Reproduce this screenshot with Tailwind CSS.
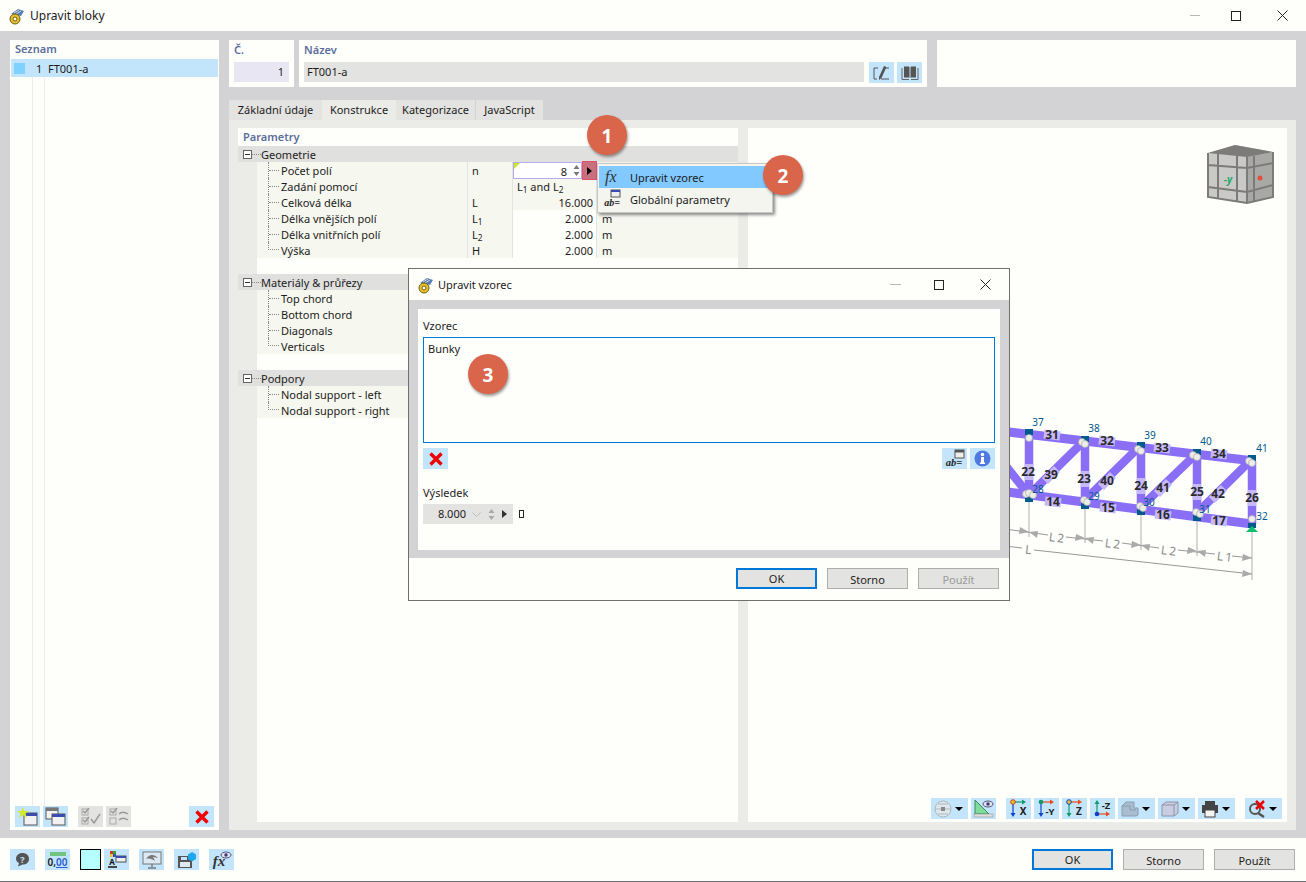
<!DOCTYPE html>
<html lang="cs">
<head>
<meta charset="UTF-8" />
<title>Upravit bloky</title>
<script src="https://cdn.jsdelivr.net/npm/@tailwindcss/browser@4"></script>
</head>
<body class="bg-[#fefefb]">
<div class="relative flex h-[882px] w-[1306px] flex-col overflow-hidden border-b border-[#6f6f6f] bg-[#fefefb] font-['Noto_Sans',sans-serif] text-[11px] leading-4 text-[#1c1c1c]">

  <!-- title bar -->
  <div class="flex h-[31px] shrink-0 items-center pl-[8px]">
    <svg class="h-[18px] w-[18px]" viewBox="0 0 18 18"><path d="M3 7 L10 2 L16 4 L13 9 Z" fill="#5a7db0"/><path d="M6 6 L11 3 M8 7 L13 4" stroke="#c9d6ea"/><circle cx="7" cy="12" r="5" fill="#e8c32a" stroke="#6d5a10"/><circle cx="7" cy="12" r="2" fill="#fefefb" stroke="#6d5a10"/></svg>
    <span class="ml-[4px] text-[12px]">Upravit bloky</span>
    <div class="ml-auto flex items-center">
      <span class="mr-[31px] h-px w-[10px] bg-[#b8b8b8]"></span>
      <span class="mr-[36px] h-[10px] w-[10px] border border-[#222]"></span>
      <svg class="mr-[18px] h-[11px] w-[11px]" viewBox="0 0 11 11"><path d="M0.5 0.5 L10.5 10.5 M10.5 0.5 L0.5 10.5" stroke="#222"/></svg>
    </div>
  </div>

  <!-- body -->
  <div class="flex h-[807px] shrink-0 gap-[10px] bg-[#d3d3d6] pb-[8px] pl-[10px] pr-[10px] pt-[9px]">

    <!-- list -->
    <div class="flex w-[209px] flex-col bg-[#fefefb]">
      <div class="flex h-[19px] items-center pb-[2px] pl-[5px] font-semibold text-[#5b6f9c]">Seznam</div>
      <div class="mx-px flex h-[18px] items-center bg-[#c3e5fb]">
        <span class="ml-[3px] h-[11px] w-[11px] bg-[#7fd1ff]"></span>
        <span class="ml-[11px] w-[5px] pt-[2px] text-right">1</span>
        <span class="ml-[7px] pt-[2px]">FT001-a</span>
      </div>
      <div class="ml-[22px] h-[729px] w-[13px] border-x border-[#ececea]"></div>
      <div class="flex pl-[5px]">
        <button class="flex h-[21px] w-[25px] items-center justify-center bg-[#c3e5fb]">
          <svg class="h-[19px] w-[21px]" viewBox="0 0 21 19"><rect x="7" y="6" width="13" height="12" fill="#f2f2f2" stroke="#555"/><rect x="7" y="6" width="13" height="3" fill="#3b4bb0"/><path d="M6 0 L7.5 4 L12 4 L8.5 6.5 L10 11 L6 8 L2 11 L3.5 6.5 L0 4 L4.5 4 Z" fill="#d5e82a"/></svg>
        </button>
        <button class="ml-[3px] flex h-[21px] w-[25px] items-center justify-center bg-[#c3e5fb]">
          <svg class="h-[19px] w-[21px]" viewBox="0 0 21 19"><rect x="1" y="1" width="12" height="11" fill="#f2f2f2" stroke="#555"/><rect x="1" y="1" width="12" height="3" fill="#777"/><rect x="7" y="7" width="13" height="11" fill="#f2f2f2" stroke="#555"/><rect x="7" y="7" width="13" height="3" fill="#3b4bb0"/></svg>
        </button>
        <button class="ml-[10px] flex h-[21px] w-[25px] items-center justify-center bg-[#e3e3e1]">
          <svg class="h-[17px] w-[20px]" viewBox="0 0 20 17"><rect x="1" y="1" width="6" height="6" fill="none" stroke="#aaa"/><rect x="1" y="10" width="6" height="6" fill="none" stroke="#aaa"/><path d="M2 3 L4 5 L8 0 M2 12 L4 14 L8 9 M10 11 L13 15 L19 6" fill="none" stroke="#999" stroke-width="1.5"/></svg>
        </button>
        <button class="ml-[3px] flex h-[21px] w-[25px] items-center justify-center bg-[#e3e3e1]">
          <svg class="h-[17px] w-[20px]" viewBox="0 0 20 17"><rect x="1" y="1" width="6" height="6" fill="none" stroke="#aaa"/><rect x="1" y="10" width="6" height="6" fill="none" stroke="#aaa"/><path d="M2 3 L4 5 L8 0 M10 6 C13 3 16 4 19 6 M10 12 C13 9 16 10 19 12" fill="none" stroke="#999" stroke-width="1.5"/></svg>
        </button>
        <button class="ml-[58px] flex h-[21px] w-[25px] items-center justify-center bg-[#c3e5fb]">
          <svg class="h-[14px] w-[14px]" viewBox="0 0 14 14"><path d="M1.5 1.5 L12.5 12.5 M12.5 1.5 L1.5 12.5" stroke="#f00000" stroke-width="3.4"/></svg>
        </button>
      </div>
    </div>

    <!-- right column -->
    <div class="flex w-[1067px] flex-col">
      <div class="flex h-[47px] gap-[5px]">
        <div class="w-[65px] bg-[#fefefb] px-[5px]">
          <div class="h-[22px] pt-[2px] font-semibold text-[#5b6f9c]">Č.</div>
          <div class="flex h-[20px] items-center justify-end bg-[#e8e6f2] px-[5px]">1</div>
        </div>
        <div class="flex w-[628px] flex-col bg-[#fefefb] px-[5px]">
          <div class="h-[22px] pt-[2px] font-semibold text-[#5b6f9c]">Název</div>
          <div class="flex items-start">
            <div class="flex h-[20px] w-[560px] items-center bg-[#e3e3e1] px-[3px]">FT001-a</div>
            <button class="ml-[5px] flex h-[21px] w-[25px] items-center justify-center bg-[#c3e5fb]">
              <svg class="h-[16px] w-[18px]" viewBox="0 0 18 16"><path d="M5 3 H1 V14 H4 M8 14 H16 M12 3 H16" fill="none" stroke="#555"/><path d="M6 12 L11 1 L13.5 2 L8.5 13 L6 15 Z" fill="#555"/></svg>
            </button>
            <button class="ml-[3px] flex h-[21px] w-[25px] items-center justify-center bg-[#c3e5fb]">
              <svg class="h-[16px] w-[18px]" viewBox="0 0 18 16"><path d="M3 1.5 H8 L8.5 2.5 V13 L8 12.5 H3 Z M15 1.5 H10 L9.5 2.5 V13 L10 12.5 H15 Z" fill="#555"/><path d="M1 3 V14.5 H8 M17 3 V14.5 H10" fill="none" stroke="#666"/></svg>
            </button>
          </div>
        </div>
        <div class="ml-[5px] w-[359px] bg-[#fefefb]"></div>
      </div>

      <!-- tabs -->
      <div class="mt-[13px] flex h-[20px] items-center">
        <div class="flex h-full w-[93px] items-center justify-center bg-[#e3e3e1]">Základní údaje</div>
        <div class="flex h-full w-[74px] items-center justify-center bg-[#ebebe7]">Konstrukce</div>
        <div class="flex h-full w-[79px] items-center justify-center bg-[#e3e3e1]">Kategorizace</div>
        <div class="ml-px flex h-full w-[67px] items-center justify-center bg-[#e3e3e1]">JavaScript</div>
      </div>

      <div class="flex h-[710px] gap-[10px] bg-[#ebebe7] p-[8px] pl-[9px]">
        <!-- parameters -->
        <div class="flex w-[500px] flex-col bg-[#fefefb]">
          <div class="flex h-[18px] items-center pl-[5px] font-semibold text-[#5b6f9c]">Parametry</div>

          <div class="flex h-[16px] items-center bg-[#e0e0de]">
            <span class="ml-[5px] flex h-[9px] w-[9px] items-center justify-center border border-[#666] bg-[#fefefb]"><span class="h-px w-[5px] bg-[#333]"></span></span>
            <span class="w-[9px] border-t border-dotted border-[#888]"></span>
            <span class="pt-[2px]">Geometrie</span>
          </div>
          <div class="flex">
            <div class="w-[19px] bg-[#ebebe7]"></div>
            <div class="flex-1 bg-[#f6f7ef]">
              <div class="flex h-[16px]">
                <div class="flex w-[210px] items-center pl-[11px]"><span class="flex h-full w-[11px] items-center border-l border-dotted border-[#888]"><span class="w-full border-t border-dotted border-[#888]"></span></span><span class="ml-[2px] pt-[2px]">Počet polí</span></div>
                <div class="flex w-[45px] items-center border-l border-[#e3e3e1] pl-[4px] pt-[2px]">n</div>
                <div class="w-[84px] border-l border-[#e3e3e1]"></div>
                <div class="border-l border-[#e3e3e1]"></div>
              </div>
              <div class="flex h-[16px]">
                <div class="flex w-[210px] items-center pl-[11px]"><span class="flex h-full w-[11px] items-center border-l border-dotted border-[#888]"><span class="w-full border-t border-dotted border-[#888]"></span></span><span class="ml-[2px] pt-[2px]">Zadání pomocí</span></div>
                <div class="w-[45px] border-l border-[#e3e3e1]"></div>
                <div class="flex w-[84px] items-center border-l border-[#e3e3e1] pl-[4px] pt-[2px]"><span>L<sub>1</sub> and L<sub>2</sub></span></div>
                <div class="border-l border-[#e3e3e1]"></div>
              </div>
              <div class="flex h-[16px]">
                <div class="flex w-[210px] items-center pl-[11px]"><span class="flex h-full w-[11px] items-center border-l border-dotted border-[#888]"><span class="w-full border-t border-dotted border-[#888]"></span></span><span class="ml-[2px] pt-[2px]">Celková délka</span></div>
                <div class="flex w-[45px] items-center border-l border-[#e3e3e1] pl-[4px] pt-[2px]">L</div>
                <div class="flex w-[84px] items-center justify-end border-l border-[#e3e3e1] pr-[3px] pt-[2px]">16.000</div>
                <div class="border-l border-[#e3e3e1]"></div>
              </div>
              <div class="flex h-[16px]">
                <div class="flex w-[210px] items-center pl-[11px]"><span class="flex h-full w-[11px] items-center border-l border-dotted border-[#888]"><span class="w-full border-t border-dotted border-[#888]"></span></span><span class="ml-[2px] pt-[2px]">Délka vnějších polí</span></div>
                <div class="flex w-[45px] items-center border-l border-[#e3e3e1] pl-[4px] pt-[2px]"><span>L<sub>1</sub></span></div>
                <div class="flex w-[84px] items-center justify-end border-l border-[#e3e3e1] bg-[#fefefb] pr-[3px] pt-[2px]">2.000</div>
                <div class="flex items-center border-l border-[#e3e3e1] pl-[5px] pt-[2px]">m</div>
              </div>
              <div class="flex h-[16px]">
                <div class="flex w-[210px] items-center pl-[11px]"><span class="flex h-full w-[11px] items-center border-l border-dotted border-[#888]"><span class="w-full border-t border-dotted border-[#888]"></span></span><span class="ml-[2px] pt-[2px]">Délka vnitřních polí</span></div>
                <div class="flex w-[45px] items-center border-l border-[#e3e3e1] pl-[4px] pt-[2px]"><span>L<sub>2</sub></span></div>
                <div class="flex w-[84px] items-center justify-end border-l border-[#e3e3e1] bg-[#fefefb] pr-[3px] pt-[2px]">2.000</div>
                <div class="flex items-center border-l border-[#e3e3e1] pl-[5px] pt-[2px]">m</div>
              </div>
              <div class="flex h-[16px]">
                <div class="flex w-[210px] items-center pl-[11px]"><span class="h-1/2 w-[11px] self-start border-b border-l border-dotted border-[#888]"></span><span class="ml-[2px] pt-[2px]">Výška</span></div>
                <div class="flex w-[45px] items-center border-l border-[#e3e3e1] pl-[4px] pt-[2px]">H</div>
                <div class="flex w-[84px] items-center justify-end border-l border-[#e3e3e1] bg-[#fefefb] pr-[3px] pt-[2px]">2.000</div>
                <div class="flex items-center border-l border-[#e3e3e1] pl-[5px] pt-[2px]">m</div>
              </div>
            </div>
          </div>
          <div class="flex h-[16px]"><div class="w-[19px] bg-[#ebebe7]"></div></div>

          <div class="flex h-[16px] items-center bg-[#e0e0de]">
            <span class="ml-[5px] flex h-[9px] w-[9px] items-center justify-center border border-[#666] bg-[#fefefb]"><span class="h-px w-[5px] bg-[#333]"></span></span>
            <span class="w-[9px] border-t border-dotted border-[#888]"></span>
            <span class="pt-[2px]">Materiály &amp; průřezy</span>
          </div>
          <div class="flex">
            <div class="w-[19px] bg-[#ebebe7]"></div>
            <div class="flex-1 bg-[#f6f7ef]">
              <div class="flex h-[16px] items-center pl-[11px]"><span class="flex h-full w-[11px] items-center border-l border-dotted border-[#888]"><span class="w-full border-t border-dotted border-[#888]"></span></span><span class="ml-[2px] pt-[2px]">Top chord</span></div>
              <div class="flex h-[16px] items-center pl-[11px]"><span class="flex h-full w-[11px] items-center border-l border-dotted border-[#888]"><span class="w-full border-t border-dotted border-[#888]"></span></span><span class="ml-[2px] pt-[2px]">Bottom chord</span></div>
              <div class="flex h-[16px] items-center pl-[11px]"><span class="flex h-full w-[11px] items-center border-l border-dotted border-[#888]"><span class="w-full border-t border-dotted border-[#888]"></span></span><span class="ml-[2px] pt-[2px]">Diagonals</span></div>
              <div class="flex h-[16px] items-center pl-[11px]"><span class="h-1/2 w-[11px] self-start border-b border-l border-dotted border-[#888]"></span><span class="ml-[2px] pt-[2px]">Verticals</span></div>
            </div>
          </div>
          <div class="flex h-[16px]"><div class="w-[19px] bg-[#ebebe7]"></div></div>

          <div class="flex h-[16px] items-center bg-[#e0e0de]">
            <span class="ml-[5px] flex h-[9px] w-[9px] items-center justify-center border border-[#666] bg-[#fefefb]"><span class="h-px w-[5px] bg-[#333]"></span></span>
            <span class="w-[9px] border-t border-dotted border-[#888]"></span>
            <span class="pt-[2px]">Podpory</span>
          </div>
          <div class="flex flex-1">
            <div class="w-[19px] bg-[#ebebe7]"></div>
            <div class="flex-1">
              <div class="bg-[#f6f7ef]">
                <div class="flex h-[16px] items-center pl-[11px]"><span class="flex h-full w-[11px] items-center border-l border-dotted border-[#888]"><span class="w-full border-t border-dotted border-[#888]"></span></span><span class="ml-[2px] pt-[2px]">Nodal support - left</span></div>
                <div class="flex h-[16px] items-center pl-[11px]"><span class="h-1/2 w-[11px] self-start border-b border-l border-dotted border-[#888]"></span><span class="ml-[2px] pt-[2px]">Nodal support - right</span></div>
              </div>
            </div>
          </div>
        </div>

        <!-- preview -->
        <div class="relative flex w-[539px] flex-col justify-end bg-[#fefefb] pb-[3px] pr-[5px]">
          <svg class="absolute left-0 top-0 h-[694px] w-[539px]" viewBox="748 128 539 694" font-family="Noto Sans, sans-serif">
            <!-- cube -->
            <path d="M1208 153 L1235 145 L1273 152 L1273 197 L1247 203 L1208 197 Z" fill="#c9c9c7"/>
            <path d="M1247 157 L1273 152 L1273 197 L1247 203 Z" fill="#a8a8a6"/>
            <path d="M1208 153 L1235 145 L1273 152 L1247 157 Z" fill="#7d7a7a"/>
            <path d="M1208 165 L1247 168 L1273 163 M1208 187 L1247 192 L1273 185 M1218 154 V199 M1237 156 V202 M1247 157 V203 M1254 156 V201 M1208 153 V197 L1247 203 L1273 197 V152" fill="none" stroke="#7d7a7a" stroke-width="2"/>
            <text x="1228" y="183" font-size="10" font-weight="700" font-style="italic" fill="#1fa968" text-anchor="middle">-y</text>
            <circle cx="1260" cy="178" r="2.5" fill="#e0503a"/>
            <!-- dimensions -->
            <g stroke="#bcbcbc" stroke-width="1.2">
              <path d="M1029 498 V537 M1085 503 V543 M1141 510 V550 M1197 516 V556 M1252 530 V580"/>
            </g>
            <g stroke="#999" stroke-width="1" fill="none">
              <path d="M1005 529 L1048 535 M1066 537 L1103 541 M1122 543 L1159 548 M1178 550 L1215 554 M1232 556 L1252 558"/>
              <path d="M1005 546 L1022 548 M1034 550 L1252 574"/>
            </g>
            <g fill="#aaa">
              <path d="M1029 532 L1020 527 L1019 534 Z M1029 532 L1038 531 L1037 538 Z M1085 538 L1076 534 L1075 541 Z M1085 538 L1094 537 L1093 544 Z M1141 545 L1132 541 L1131 548 Z M1141 545 L1150 544 L1149 551 Z M1197 551 L1188 547 L1187 554 Z M1197 551 L1206 550 L1205 557 Z M1252 558 L1243 554 L1242 561 Z M1252 574 L1243 570 L1242 577 Z"/>
            </g>
            <g fill="#8a8a8a" font-size="12" letter-spacing="2">
              <text x="1029" y="554" text-anchor="middle" transform="rotate(7 1029 554)">L</text>
              <text x="1057" y="542" text-anchor="middle" transform="rotate(7 1057 542)">L2</text>
              <text x="1113" y="548" text-anchor="middle" transform="rotate(7 1113 548)">L2</text>
              <text x="1169" y="555" text-anchor="middle" transform="rotate(7 1169 555)">L2</text>
              <text x="1225" y="561" text-anchor="middle" transform="rotate(7 1225 561)">L1</text>
            </g>
            <!-- members -->
            <g stroke="#8a6ff6" stroke-width="9" fill="none">
              <path d="M1000 431 L1254 461"/>
              <path d="M1000 491 L1252 524"/>
              <path d="M1029 437 V495 M1085 442 V500 M1141 448 V507 M1197 456 V513 M1252 461 V524" stroke-width="8.5"/>
              <path d="M1029 495 L1083 442 M1085 500 L1138 448 M1141 507 L1194 456 M1197 513 L1250 461 M1005 465 L1029 495" stroke-width="8.5"/>
            </g>
            <g stroke="#c5b9fb" stroke-width="9" fill="none">
              <path d="M1044 434 L1060 436 M1099 440 L1115 442 M1154 447 L1170 449 M1211 453 L1227 455"/>
              <path d="M1045 501 L1061 503 M1100 507 L1116 509 M1155 514 L1171 516 M1211 520 L1227 522"/>
            </g>
            <g stroke="#c5b9fb" stroke-width="8.5" fill="none">
              <path d="M1029 464 V480 M1085 471 V487 M1141 478 V494 M1197 484 V500 M1252 490 V506"/>
              <path d="M1045 481 L1057 469 M1101 487 L1113 475 M1157 494 L1169 482 M1212 500 L1224 488"/>
            </g>
            <g fill="#005a8c">
              <rect x="1025" y="429" width="8" height="6"/><rect x="1081" y="436" width="8" height="6"/><rect x="1137" y="442" width="8" height="6"/><rect x="1193" y="449" width="8" height="6"/><rect x="1248" y="455" width="8" height="6"/>
              <rect x="1025" y="496" width="8" height="6"/><rect x="1081" y="503" width="8" height="6"/><rect x="1137" y="509" width="8" height="6"/><rect x="1193" y="515" width="8" height="6"/><rect x="1248" y="523" width="8" height="5"/>
            </g>
            <path d="M1252 526 L1258 532 H1246 Z" fill="#10c070"/>
            <g fill="#eeeee8" stroke="#a8a8a8" stroke-width="0.7">
              <circle cx="1029" cy="438" r="3.5"/>
              <circle cx="1082" cy="442" r="3.5"/><circle cx="1085" cy="444" r="3.5"/>
              <circle cx="1138" cy="449" r="3.5"/><circle cx="1141" cy="451" r="3.5"/>
              <circle cx="1193" cy="455" r="3.5"/><circle cx="1197" cy="457" r="3.5"/>
              <circle cx="1249" cy="461" r="3.5"/><circle cx="1252" cy="463" r="3.5"/>
              <circle cx="1026" cy="494" r="3.5"/><circle cx="1029" cy="493" r="3.5"/><circle cx="1033" cy="495" r="3.5"/>
              <circle cx="1084" cy="500" r="3.5"/><circle cx="1087" cy="502" r="3.5"/>
              <circle cx="1140" cy="506" r="3.5"/><circle cx="1143" cy="508" r="3.5"/>
              <circle cx="1196" cy="512" r="3.5"/><circle cx="1200" cy="514" r="3.5"/>
              <circle cx="1252" cy="519" r="3.5"/>
            </g>
            <g fill="#2b2b2b" font-size="12" font-weight="700" text-anchor="middle">
              <text x="1052" y="439">31</text><text x="1107" y="445">32</text><text x="1162" y="452">33</text><text x="1219" y="458">34</text>
              <text x="1028" y="476">22</text><text x="1084" y="483">23</text><text x="1141" y="490">24</text><text x="1197" y="496">25</text><text x="1252" y="502">26</text>
              <text x="1051" y="479">39</text><text x="1107" y="485">40</text><text x="1163" y="492">41</text><text x="1218" y="498">42</text>
              <text x="1053" y="506">14</text><text x="1108" y="512">15</text><text x="1163" y="519">16</text><text x="1219" y="525">17</text>
              <text x="1003" y="474">38</text>
            </g>
            <g fill="#005a8c" font-size="10" text-anchor="middle">
              <text x="1038" y="426">37</text><text x="1094" y="432">38</text><text x="1150" y="439">39</text><text x="1206" y="445">40</text><text x="1262" y="452">41</text>
              <text x="1038" y="493">28</text><text x="1094" y="500">29</text><text x="1149" y="506">30</text><text x="1205" y="513">31</text><text x="1262" y="520">32</text>
            </g>
          </svg>

          <div class="relative flex justify-end">
            <button class="flex h-[21px] w-[37px] items-center justify-between bg-[#c3e5fb] pl-[2px] pr-[5px]">
              <svg class="h-[18px] w-[20px]" viewBox="0 0 20 18"><ellipse cx="10" cy="9" rx="8" ry="8" fill="#dce8ee" stroke="#b0b8be"/><path d="M2 9 H18 M5 4 H15 M5 14 H15" stroke="#b0b8be"/><rect x="8" y="7" width="4" height="4" fill="#888"/></svg>
              <span class="h-0 w-0 border-x-[4px] border-t-[4px] border-x-transparent border-t-black"></span>
            </button>
            <button class="ml-[3px] flex h-[21px] w-[25px] items-center justify-center bg-[#c3e5fb]">
              <svg class="h-[19px] w-[21px]" viewBox="0 0 21 19"><path d="M2 1 V15 H16 Z" fill="#7fdc9c" stroke="#3a8a5a"/><rect x="1" y="15" width="19" height="3" fill="#ddd" stroke="#888" stroke-width="0.5"/><ellipse cx="15" cy="5" rx="5" ry="3" fill="#dfe3f2" stroke="#55557a"/><circle cx="15" cy="5" r="1.7" fill="#3b3b70"/></svg>
            </button>
            <button class="ml-[10px] flex h-[21px] w-[25px] items-center justify-center bg-[#c3e5fb]">
              <svg class="h-[19px] w-[21px]" viewBox="0 0 21 19"><path d="M5 3 H15" stroke="#0f9a6a" stroke-width="1.2"/><path d="M14 0.5 L18 3 L14 5.5 Z" fill="#0f9a6a"/><path d="M5 3 V15" stroke="#1040d0" stroke-width="1.2"/><path d="M2.5 14 L5 18 L7.5 14 Z" fill="#1040d0"/><circle cx="5" cy="3" r="2.3" fill="#e8c32a" stroke="#d04020"/><text x="15" y="16" font-size="10" font-weight="700" text-anchor="middle" fill="#222">X</text></svg>
            </button>
            <button class="ml-[3px] flex h-[21px] w-[25px] items-center justify-center bg-[#c3e5fb]">
              <svg class="h-[19px] w-[21px]" viewBox="0 0 21 19"><path d="M5 3 H15" stroke="#e84a1a" stroke-width="1.2"/><path d="M14 0.5 L18 3 L14 5.5 Z" fill="#e84a1a"/><path d="M5 3 V15" stroke="#1040d0" stroke-width="1.2"/><path d="M2.5 14 L5 18 L7.5 14 Z" fill="#1040d0"/><circle cx="5" cy="3" r="2.3" fill="#0f9a6a"/><text x="14" y="16" font-size="9.5" font-weight="700" text-anchor="middle" fill="#222">-Y</text></svg>
            </button>
            <button class="ml-[3px] flex h-[21px] w-[25px] items-center justify-center bg-[#c3e5fb]">
              <svg class="h-[19px] w-[21px]" viewBox="0 0 21 19"><path d="M5 3 H15" stroke="#e84a1a" stroke-width="1.2"/><path d="M14 0.5 L18 3 L14 5.5 Z" fill="#e84a1a"/><path d="M5 3 V15" stroke="#0f9a6a" stroke-width="1.2"/><path d="M2.5 14 L5 18 L7.5 14 Z" fill="#0f9a6a"/><circle cx="5" cy="3" r="2.3" fill="#e8c32a" stroke="#1040d0"/><text x="15" y="16" font-size="10" font-weight="700" text-anchor="middle" fill="#222">Z</text></svg>
            </button>
            <button class="ml-[3px] flex h-[21px] w-[25px] items-center justify-center bg-[#c3e5fb]">
              <svg class="h-[19px] w-[21px]" viewBox="0 0 21 19"><path d="M5 15 H15" stroke="#e84a1a" stroke-width="1.2"/><path d="M14 12.5 L18 15 L14 17.5 Z" fill="#e84a1a"/><path d="M5 4 V15" stroke="#0f9a6a" stroke-width="1.2"/><path d="M2.5 5 L5 1 L7.5 5 Z" fill="#0f9a6a"/><circle cx="5" cy="15" r="2.3" fill="#1040d0"/><text x="14" y="10" font-size="9.5" font-weight="700" text-anchor="middle" fill="#222">-Z</text></svg>
            </button>
            <button class="ml-[3px] flex h-[21px] w-[37px] items-center justify-between bg-[#c3e5fb] pl-[2px] pr-[5px]">
              <svg class="h-[18px] w-[20px]" viewBox="0 0 20 18"><path d="M2 6 L6 2 H14 V8 H18 V15 L16 16 H2 Z" fill="#a9bdd0" stroke="#8a9db0"/><path d="M2 6 H10 V10 H16" fill="none" stroke="#8a9db0"/></svg>
              <span class="h-0 w-0 border-x-[4px] border-t-[4px] border-x-transparent border-t-black"></span>
            </button>
            <button class="ml-[3px] flex h-[21px] w-[37px] items-center justify-between bg-[#c3e5fb] pl-[2px] pr-[5px]">
              <svg class="h-[18px] w-[20px]" viewBox="0 0 20 18"><path d="M2 5 L6 2 H18 V13 L14 16 H2 Z" fill="#c8cde0" stroke="#8f93a8"/><path d="M2 5 H14 V16 M14 5 L18 2" fill="none" stroke="#8f93a8"/></svg>
              <span class="h-0 w-0 border-x-[4px] border-t-[4px] border-x-transparent border-t-black"></span>
            </button>
            <button class="ml-[3px] flex h-[21px] w-[37px] items-center justify-between bg-[#c3e5fb] pl-[2px] pr-[5px]">
              <svg class="h-[18px] w-[20px]" viewBox="0 0 20 18"><rect x="5" y="1" width="10" height="4" fill="#444"/><path d="M2 5 H18 V13 H15 V10 H5 V13 H2 Z" fill="#444"/><rect x="5" y="10" width="10" height="7" fill="#f4f4f4" stroke="#444"/></svg>
              <span class="h-0 w-0 border-x-[4px] border-t-[4px] border-x-transparent border-t-black"></span>
            </button>
            <button class="ml-[10px] flex h-[21px] w-[37px] items-center justify-between bg-[#c3e5fb] pl-[2px] pr-[5px]">
              <svg class="h-[18px] w-[20px]" viewBox="0 0 20 18"><circle cx="8" cy="9" r="5" fill="none" stroke="#555" stroke-width="2"/><path d="M11 13 L17 17" stroke="#555" stroke-width="2.5"/><path d="M9 1 L17 9 M17 1 L9 9" stroke="#f00000" stroke-width="2.5"/></svg>
              <span class="h-0 w-0 border-x-[4px] border-t-[4px] border-x-transparent border-t-black"></span>
            </button>
          </div>
        </div>
      </div>
    </div>
  </div>

  <!-- footer -->
  <div class="flex flex-1 items-start pl-[10px] pr-[11px] pt-[11px]">
    <button class="flex h-[21px] w-[25px] items-center justify-center bg-[#c3e5fb]">
      <svg class="h-[15px] w-[15px]" viewBox="0 0 15 15"><path d="M7.5 1 C11.5 1 14 3.5 14 7 C14 10.5 11.5 12.5 7.5 12.5 L3 14.5 L4 11 C2 10 1 8.5 1 7 C1 3.5 3.5 1 7.5 1 Z" fill="#555"/><text x="7.5" y="10.5" font-size="9" font-weight="700" text-anchor="middle" fill="#c3e5fb">?</text></svg>
    </button>
    <button class="ml-[10px] flex h-[21px] w-[25px] flex-col items-center justify-center bg-[#c3e5fb]">
      <span class="h-[4px] w-[16px] bg-[#6fc47f]"></span>
      <span class="text-[10px] font-semibold leading-[12px]">0,<span class="text-[#2a5bd0] underline">00</span></span>
    </button>
    <span class="ml-[10px] h-[21px] w-[21px] border border-black bg-[#b6ffff]"></span>
    <button class="ml-[3px] flex h-[21px] w-[25px] items-center justify-center bg-[#c3e5fb]">
      <svg class="h-[19px] w-[21px]" viewBox="0 0 21 19"><rect x="4" y="1" width="3" height="3" fill="#e03030"/><rect x="7" y="1" width="3" height="3" fill="#30a040"/><rect x="4" y="4" width="3" height="3" fill="#e8c32a"/><rect x="7" y="4" width="3" height="3" fill="#3050d0"/><rect x="10" y="6" width="10" height="6" fill="#eee" stroke="#555"/><rect x="10" y="6" width="10" height="2" fill="#3b4bb0"/><text x="6" y="15" font-size="8" font-weight="700" text-anchor="middle" fill="#111">A</text><rect x="2" y="16" width="9" height="2" fill="#444"/></svg>
    </button>
    <button class="ml-[10px] flex h-[21px] w-[25px] items-center justify-center bg-[#c3e5fb]">
      <svg class="h-[18px] w-[20px]" viewBox="0 0 20 18"><rect x="1" y="1" width="18" height="12" fill="#dce8f2" stroke="#777"/><path d="M4 8 C7 3 12 3 16 7 L11 6 L13 10 C10 8 7 7 4 8 Z" fill="#777"/><path d="M10 13 V16 M6 17 H14" stroke="#777" stroke-width="1.4"/></svg>
    </button>
    <button class="ml-[10px] flex h-[21px] w-[25px] items-center justify-center bg-[#c3e5fb]">
      <svg class="h-[18px] w-[20px]" viewBox="0 0 20 18"><path d="M1 5 H13 L15 7 V17 H1 Z" fill="#555"/><rect x="4" y="6" width="6" height="3" fill="#c3e5fb"/><rect x="3" y="11" width="10" height="5" fill="#dfe9f2"/><path d="M15 1 L19 3.5 V8 L15 10.5 L11 8 V3.5 Z" fill="#1ea7f0"/></svg>
    </button>
    <button class="ml-[10px] flex h-[21px] w-[25px] items-center justify-center bg-[#c3e5fb]">
      <svg class="h-[19px] w-[21px]" viewBox="0 0 21 19"><text x="8" y="16" font-family="Liberation Serif, serif" font-style="italic" font-weight="700" font-size="15" text-anchor="middle" fill="#333">fx</text><ellipse cx="15" cy="5" rx="5" ry="3" fill="#dfe3f2" stroke="#55557a"/><circle cx="15" cy="5" r="1.7" fill="#3b3b70"/></svg>
    </button>
    <div class="ml-auto flex gap-[10px]">
      <button class="h-[21px] w-[81px] border-2 border-[#0078d7] bg-[#e3e3e1] pt-px">OK</button>
      <button class="h-[21px] w-[81px] border border-[#adadad] bg-[#e3e3e1] pt-[2px]">Storno</button>
      <button class="h-[21px] w-[81px] border border-[#adadad] bg-[#e3e3e1] pt-[2px]">Použít</button>
    </div>
  </div>

  <!-- context menu -->
  <div class="absolute left-[513px] top-[162px] flex h-[18px] w-[84px]">
    <div class="relative flex h-[17px] w-[69px] items-center justify-end border border-[#b9a9e8] bg-white pr-[14px] pt-[2px]">
      <span class="absolute left-0 top-0 h-0 w-0 border-r-[6px] border-t-[6px] border-r-transparent border-t-[#c4e82a]"></span>
      8
      <svg class="absolute right-[1px] top-[2px] h-[11px] w-[7px]" viewBox="0 0 7 11"><path d="M3.5 0 L6.5 4 H0.5 Z M3.5 11 L6.5 7 H0.5 Z" fill="#777"/></svg>
    </div>
    <div class="-mt-px flex h-[19px] w-[15px] items-center justify-center border border-[#e0506a] bg-[#c9707e]"><span class="h-0 w-0 border-y-[4px] border-l-[5px] border-y-transparent border-l-black"></span></div>
  </div>
  <div class="absolute left-[597px] top-[163px] w-[176px] border border-[#c8c8c8] bg-[#f5f5f0] py-[2px] pl-px shadow-[2px_2px_3px_rgba(0,0,0,0.45)]">
    <div class="flex h-[22px] items-center bg-[#82c9ff]">
      <span class="w-[31px] pl-[6px] font-['Liberation_Serif',serif] text-[16px] font-normal italic leading-none text-[#333]">fx</span>
      <span class="pt-[2px]">Upravit vzorec</span>
    </div>
    <div class="flex h-[22px] items-center">
      <svg class="ml-[4px] mr-[8px] h-[20px] w-[19px]" viewBox="0 0 19 20"><rect x="8" y="1" width="9" height="7" fill="#eee" stroke="#555"/><rect x="8" y="1" width="9" height="2" fill="#3b4bb0"/><text x="9" y="17" font-family="Liberation Serif, serif" font-style="italic" font-weight="700" font-size="10" text-anchor="middle" fill="#222">ab=</text></svg>
      <span class="pt-[2px]">Globální parametry</span>
    </div>
  </div>

  <!-- dialog -->
  <div class="absolute left-[408px] top-[268px] flex h-[333px] w-[602px] flex-col border border-[#6f6f6f] bg-[#fefefb]">
    <div class="flex h-[31px] shrink-0 items-center pl-[8px]">
      <svg class="h-[18px] w-[18px]" viewBox="0 0 18 18"><path d="M3 7 L10 2 L16 4 L13 9 Z" fill="#5a7db0"/><path d="M6 6 L11 3 M8 7 L13 4" stroke="#c9d6ea"/><circle cx="7" cy="12" r="5" fill="#e8c32a" stroke="#6d5a10"/><circle cx="7" cy="12" r="2" fill="#fefefb" stroke="#6d5a10"/></svg>
      <span class="ml-[3px]">Upravit vzorec</span>
      <div class="ml-auto flex items-center">
        <span class="mr-[33px] h-px w-[11px] bg-[#b8b8b8]"></span>
        <span class="mr-[36px] h-[10px] w-[10px] border border-[#222]"></span>
        <svg class="mr-[18px] h-[11px] w-[11px]" viewBox="0 0 11 11"><path d="M0.5 0.5 L10.5 10.5 M10.5 0.5 L0.5 10.5" stroke="#222"/></svg>
      </div>
    </div>
    <div class="h-[258px] shrink-0 bg-[#d3d3d6] px-[9px] py-[9px]">
      <div class="flex h-[241px] flex-col bg-[#fefefb] px-[5px]">
        <div class="flex h-[28px] items-end pb-[3px]">Vzorec</div>
        <div class="h-[106px] border border-[#0078d7] px-[4px] py-[3px]">Bunky</div>
        <div class="mt-[5px] flex justify-between">
          <button class="flex h-[21px] w-[25px] items-center justify-center bg-[#c3e5fb]">
            <svg class="h-[14px] w-[14px]" viewBox="0 0 14 14"><path d="M1.5 1.5 L12.5 12.5 M12.5 1.5 L1.5 12.5" stroke="#f00000" stroke-width="3.4"/></svg>
          </button>
          <div class="flex gap-[3px]">
            <button class="flex h-[21px] w-[25px] items-center justify-center bg-[#c3e5fb]">
              <svg class="h-[19px] w-[21px]" viewBox="0 0 21 19"><rect x="11" y="1" width="9" height="8" fill="#eee" stroke="#555"/><rect x="11" y="1" width="9" height="2.5" fill="#555"/><text x="10" y="17" font-family="Liberation Serif, serif" font-style="italic" font-weight="700" font-size="10.5" text-anchor="middle" fill="#222">ab=</text></svg>
            </button>
            <button class="flex h-[21px] w-[25px] items-center justify-center bg-[#c3e5fb]">
              <svg class="h-[17px] w-[17px]" viewBox="0 0 17 17"><circle cx="8.5" cy="8.5" r="8" fill="#4f78e0"/><rect x="7" y="7" width="3" height="6.5" fill="#fff"/><rect x="6" y="12.5" width="5" height="1.5" fill="#fff"/><circle cx="8.5" cy="4.5" r="1.7" fill="#fff"/></svg>
            </button>
          </div>
        </div>
        <div class="mt-[16px] h-[16px]">Výsledek</div>
        <div class="mt-[3px] flex items-center">
          <div class="flex h-[20px] w-[90px] items-center bg-[#e3e3e1]">
            <span class="w-[43px] text-right">8.000</span>
            <svg class="ml-[6px] h-[5px] w-[9px]" viewBox="0 0 9 5"><path d="M0.5 0.5 L4.5 4.5 L8.5 0.5" fill="none" stroke="#bbb"/></svg>
            <svg class="ml-[7px] h-[11px] w-[7px]" viewBox="0 0 7 11"><path d="M3.5 0 L6.5 4 H0.5 Z M3.5 11 L6.5 7 H0.5 Z" fill="#aaa"/></svg>
            <span class="ml-[7px] h-0 w-0 border-y-[4px] border-l-[5px] border-y-transparent border-l-[#333]"></span>
          </div>
          <span class="ml-[6px] h-[8px] w-[5px] border border-[#222] bg-[#fefefb]"></span>
        </div>
      </div>
    </div>
    <div class="flex flex-1 items-start justify-end gap-[10px] pr-[10px] pt-[10px]">
      <button class="h-[21px] w-[81px] border-2 border-[#0078d7] bg-[#e3e3e1] pt-px">OK</button>
      <button class="h-[21px] w-[81px] border border-[#adadad] bg-[#e3e3e1] pt-[2px]">Storno</button>
      <button class="h-[21px] w-[81px] border border-[#adadad] bg-[#e3e3e1] pt-[2px] text-[#9a9a9a]">Použít</button>
    </div>
  </div>

  <!-- callouts -->
  <div class="absolute left-[587px] top-[115px] flex h-[40px] w-[40px] items-center justify-center rounded-full bg-[#d9654a] pt-[2px] text-[19px] font-bold text-white shadow-[1px_2px_3px_rgba(0,0,0,0.4)]">1</div>
  <div class="absolute left-[763px] top-[155px] flex h-[40px] w-[40px] items-center justify-center rounded-full bg-[#d9654a] pt-[2px] text-[19px] font-bold text-white shadow-[1px_2px_3px_rgba(0,0,0,0.4)]">2</div>
  <div class="absolute left-[468px] top-[354px] flex h-[40px] w-[40px] items-center justify-center rounded-full bg-[#d9654a] pt-[2px] text-[19px] font-bold text-white shadow-[1px_2px_3px_rgba(0,0,0,0.4)]">3</div>
</div>
</body>
</html>
